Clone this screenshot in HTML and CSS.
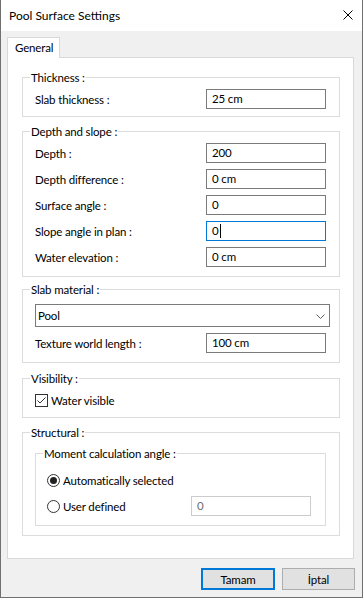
FILE: index.html
```html
<!DOCTYPE html>
<html>
<head>
<meta charset="utf-8">
<link rel="stylesheet" href="styles.css">
</head>
<body>
<div class="window">
  <div class="titlebar">
    <span class="title">Pool Surface Settings</span>
    <svg class="close" width="10" height="10" viewBox="0 0 10 10"><path d="M0.5 0.5 L9.5 9.5 M9.5 0.5 L0.5 9.5" stroke="#000" stroke-width="1" fill="none"/></svg>
  </div>
  <div class="main">
    <div class="tabs"><div class="tab">General</div></div>
    <div class="panel">
      <fieldset class="group">
        <legend>Thickness :</legend>
        <div class="rows">
          <div class="row"><span>Slab thickness :</span><div class="tb">25 cm</div></div>
        </div>
      </fieldset>

      <fieldset class="group g-depth">
        <legend>Depth and slope :</legend>
        <div class="rows rows-depth">
          <div class="row"><span>Depth :</span><div class="tb">200</div></div>
          <div class="row"><span>Depth difference :</span><div class="tb">0 cm</div></div>
          <div class="row"><span>Surface angle :</span><div class="tb">0</div></div>
          <div class="row"><span>Slope angle in plan :</span><div class="tb focus">0<span class="caret"></span></div></div>
          <div class="row"><span>Water elevation :</span><div class="tb">0 cm</div></div>
        </div>
      </fieldset>

      <fieldset class="group g-mat">
        <legend>Slab material :</legend>
        <div class="mat-body">
          <div class="select"><span>Pool</span><svg width="9" height="5" viewBox="0 0 9 5"><path d="M0.5 0.5 L4.5 4.5 L8.5 0.5" stroke="#606060" stroke-width="1" fill="none"/></svg></div>
          <div class="row row-tex"><span>Texture world length :</span><div class="tb">100 cm</div></div>
        </div>
      </fieldset>

      <fieldset class="group g-vis">
        <legend>Visibility :</legend>
        <div class="vis-body">
          <div class="check-row">
            <span class="checkbox"><svg width="11" height="11" viewBox="0 0 11 11"><path d="M1.5 5.5 L4 8 L9.5 2.5" stroke="#333" stroke-width="1" fill="none"/></svg></span>
            <span>Water visible</span>
          </div>
        </div>
      </fieldset>

      <fieldset class="group g-struct">
        <legend>Structural :</legend>
        <div class="struct-body">
          <fieldset class="group inner">
            <legend>Moment calculation angle :</legend>
            <div class="rows rows-inner">
              <div class="radio-row"><span class="radio checked"><span class="dot"></span></span><span>Automatically selected</span></div>
              <div class="radio-row"><span class="radio"></span><span>User defined</span><div class="tb disabled">0</div></div>
            </div>
          </fieldset>
        </div>
      </fieldset>
    </div>
    <div class="buttons">
      <div class="btn primary">Tamam</div>
      <div class="btn second">İptal</div>
    </div>
  </div>
</div>
</body>
</html>
```
FILE: styles.css
```css
* { box-sizing: border-box; }
html, body { margin: 0; padding: 0; }
body {
  font-family: Lato, "Noto Sans", sans-serif;
  font-size: 11.5px;
  letter-spacing: -0.15px;
  color: #000;
  background: #f0f0f0;
}
.window {
  width: 363px;
  height: 598px;
  background: #f0f0f0;
  border: 1px solid #707070;
  border-top: none;
  display: flex;
  flex-direction: column;
}
.titlebar {
  height: 31px;
  flex: none;
  background: #fff;
  display: flex;
  align-items: center;
  justify-content: space-between;
  padding: 0 9px 0 8px;
}
.title { font-size: 12px; line-height: 15px; letter-spacing: 0; }
.close { display: block; margin-top: -1px; }

.main {
  flex: 1;
  display: flex;
  flex-direction: column;
  padding: 6px 7px 7px 6px;
}
.tabs { display: flex; height: 20px; flex: none; }
.tab {
  width: 53px;
  height: 21px;
  background: #fff;
  border: 1px solid #d9d9d9;
  border-bottom: none;
  padding: 2px 0 0 7px;
  line-height: 15px;
  position: relative;
  z-index: 1;
}
.panel {
  flex: 1;
  background: #fff;
  border: 1px solid #d9d9d9;
  margin-right: 1px;
  padding: 12px 13px 0 14px;
}

.group {
  border: 1px solid #dcdcdc;
  margin: 0;
  padding: 0;
  min-width: 0;
}
.group legend {
  margin-left: 7px;
  padding: 0 1px;
  height: 15px;
  line-height: 15px;
}
.g-depth { margin-top: 7px; }
.g-mat { margin-top: 5px; }
.g-vis { margin-top: 8px; }
.g-struct { margin-top: 7px; }

.rows {
  display: flex;
  flex-direction: column;
  gap: 6px;
  padding: 4px 13px 7px 12px;
}
.rows-depth { padding-bottom: 9px; }
.row {
  display: flex;
  align-items: center;
  justify-content: space-between;
  height: 20px;
}
.tb {
  width: 120px;
  height: 20px;
  border: 1px solid #7a7a7a;
  background: #fff;
  padding-left: 5px;
  line-height: 18px;
  white-space: nowrap;
}
.tb.focus { border-color: #0078d7; }
.caret {
  display: inline-block;
  width: 1px;
  height: 14px;
  background: #000;
  vertical-align: -3px;
  margin-left: 1px;
}
.tb.disabled {
  border-color: #cccccc;
  color: #6d6d6d;
  margin-left: auto;
}

.mat-body {
  display: flex;
  flex-direction: column;
  gap: 6px;
  padding: 7px 9px 9px 12px;
}
.select {
  height: 23px;
  border: 1px solid #7a7a7a;
  background: #fff;
  display: flex;
  align-items: center;
  justify-content: space-between;
  padding: 0 4px 0 2px;
}
.select svg { display: block; margin-top: 2px; }
.row-tex { padding-right: 4px; }

.vis-body { padding: 8px 0 10px 12px; }
.check-row {
  display: flex;
  align-items: center;
  gap: 3px;
  height: 13px;
  line-height: 13px;
}
.checkbox {
  width: 13px;
  height: 13px;
  border: 1px solid #333;
  background: #fff;
  display: block;
  flex: none;
}
.checkbox svg { display: block; }

.struct-body { padding: 6px 13px 9px 12px; }
.rows-inner { padding: 9px 14px 9px 11px; }
.radio-row {
  display: flex;
  align-items: center;
  gap: 3px;
  height: 20px;
}
.radio {
  width: 13px;
  height: 13px;
  border: 1px solid #333;
  border-radius: 50%;
  background: #fff;
  flex: none;
  display: flex;
  align-items: center;
  justify-content: center;
}
.dot {
  width: 7px;
  height: 7px;
  border-radius: 50%;
  background: #222;
}

.buttons {
  flex: none;
  display: flex;
  justify-content: flex-end;
  gap: 7px;
  margin-top: 9px;
  height: 22px;
}
.btn {
  width: 74px;
  height: 22px;
  background: #e1e1e1;
  border: 1px solid #adadad;
  display: flex;
  align-items: center;
  justify-content: center;
}
.btn.primary { border: 2px solid #0078d7; }
.btn.second { width: 73px; }
```
